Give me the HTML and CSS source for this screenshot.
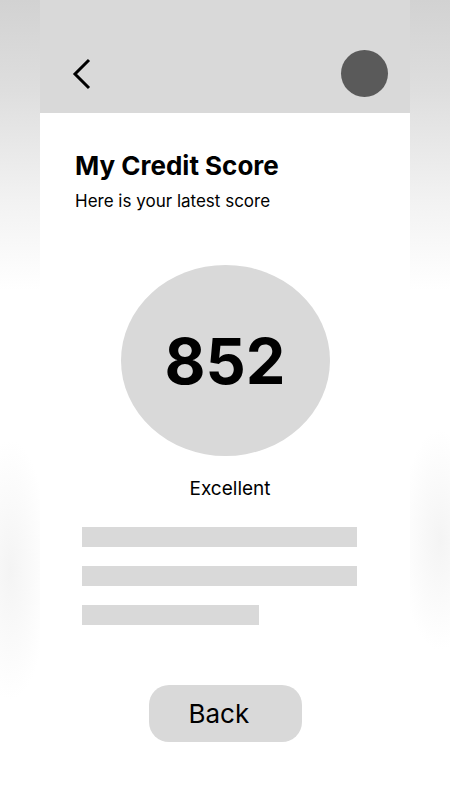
FILE: index.html
```html
<!DOCTYPE html>
<html lang="en">

<head>
    <title>My Credit Score</title>
    <link rel="stylesheet" href="styles.css">
</head>

<body>
    <div class="phone">
        <header class="top-bar">
            <svg class="back-icon" width="20" height="32" viewBox="0 0 20 32">
                <polyline points="17,2 3,16 17,30" fill="none" stroke="#000" stroke-width="3" />
            </svg>
            <div class="avatar"></div>
        </header>

        <main class="content">
            <h1>My Credit Score</h1>
            <p class="subtitle">Here is your latest score</p>

            <div class="score-circle">852</div>
            <p class="rating">Excellent</p>

            <div class="lines">
                <div class="line"></div>
                <div class="line"></div>
                <div class="line short"></div>
            </div>

            <button class="back-btn">Back</button>
        </main>
    </div>
</body>

</html>
```

FILE: styles.css
```css
body {
    margin: 0;
    padding: 0;
    min-height: 800px;
    font-family: Inter, "Noto Sans", sans-serif;
    color: #000;
    background:
        radial-gradient(ellipse 40px 130px at 10px 570px, #f4f4f4, rgba(255, 255, 255, 0)),
        radial-gradient(ellipse 40px 110px at 440px 540px, #f4f4f4, rgba(255, 255, 255, 0)),
        linear-gradient(#d2d2d2 0, #dedede 90px, #f2f2f2 200px, #ffffff 290px);
}

.phone {
    width: 370px;
    margin-left: 40px;
    min-height: 800px;
    background-color: #ffffff;
}

.top-bar {
    height: 113px;
    box-sizing: border-box;
    background-color: #d9d9d9;
    display: flex;
    justify-content: space-between;
    align-items: center;
    padding: 34px 22px 0 32px;
}

.back-icon {
    display: block;
}

.avatar {
    width: 47px;
    height: 47px;
    border-radius: 50%;
    background-color: #5a5a5a;
}

.content {
    display: flex;
    flex-direction: column;
    padding-top: 37px;
}

h1 {
    margin: 0 0 0 35px;
    font-size: 26px;
    line-height: 31px;
    font-weight: 700;
}

.subtitle {
    margin: 10px 0 0 35px;
    font-size: 17px;
    line-height: 21px;
}

.score-circle {
    align-self: center;
    margin-top: 53px;
    width: 209px;
    height: 191px;
    border-radius: 50%;
    background-color: #d9d9d9;
    display: flex;
    justify-content: center;
    align-items: center;
    font-size: 63px;
    font-weight: 700;
}

.rating {
    margin: 22px 0 0 0;
    padding-left: 10px;
    text-align: center;
    font-size: 19px;
    line-height: 22px;
}

.lines {
    display: flex;
    flex-direction: column;
    gap: 19px;
    margin: 27px 0 0 42px;
}

.line {
    width: 275px;
    height: 20px;
    background-color: #d9d9d9;
}

.line.short {
    width: 177px;
}

.back-btn {
    align-self: center;
    margin-top: 60px;
    width: 153px;
    height: 57px;
    border: none;
    border-radius: 20px;
    background-color: #d9d9d9;
    text-align: left;
    padding: 0 0 0 40px;
    font-family: Inter, "Noto Sans", sans-serif;
    font-size: 26px;
    color: #000;
}
```
